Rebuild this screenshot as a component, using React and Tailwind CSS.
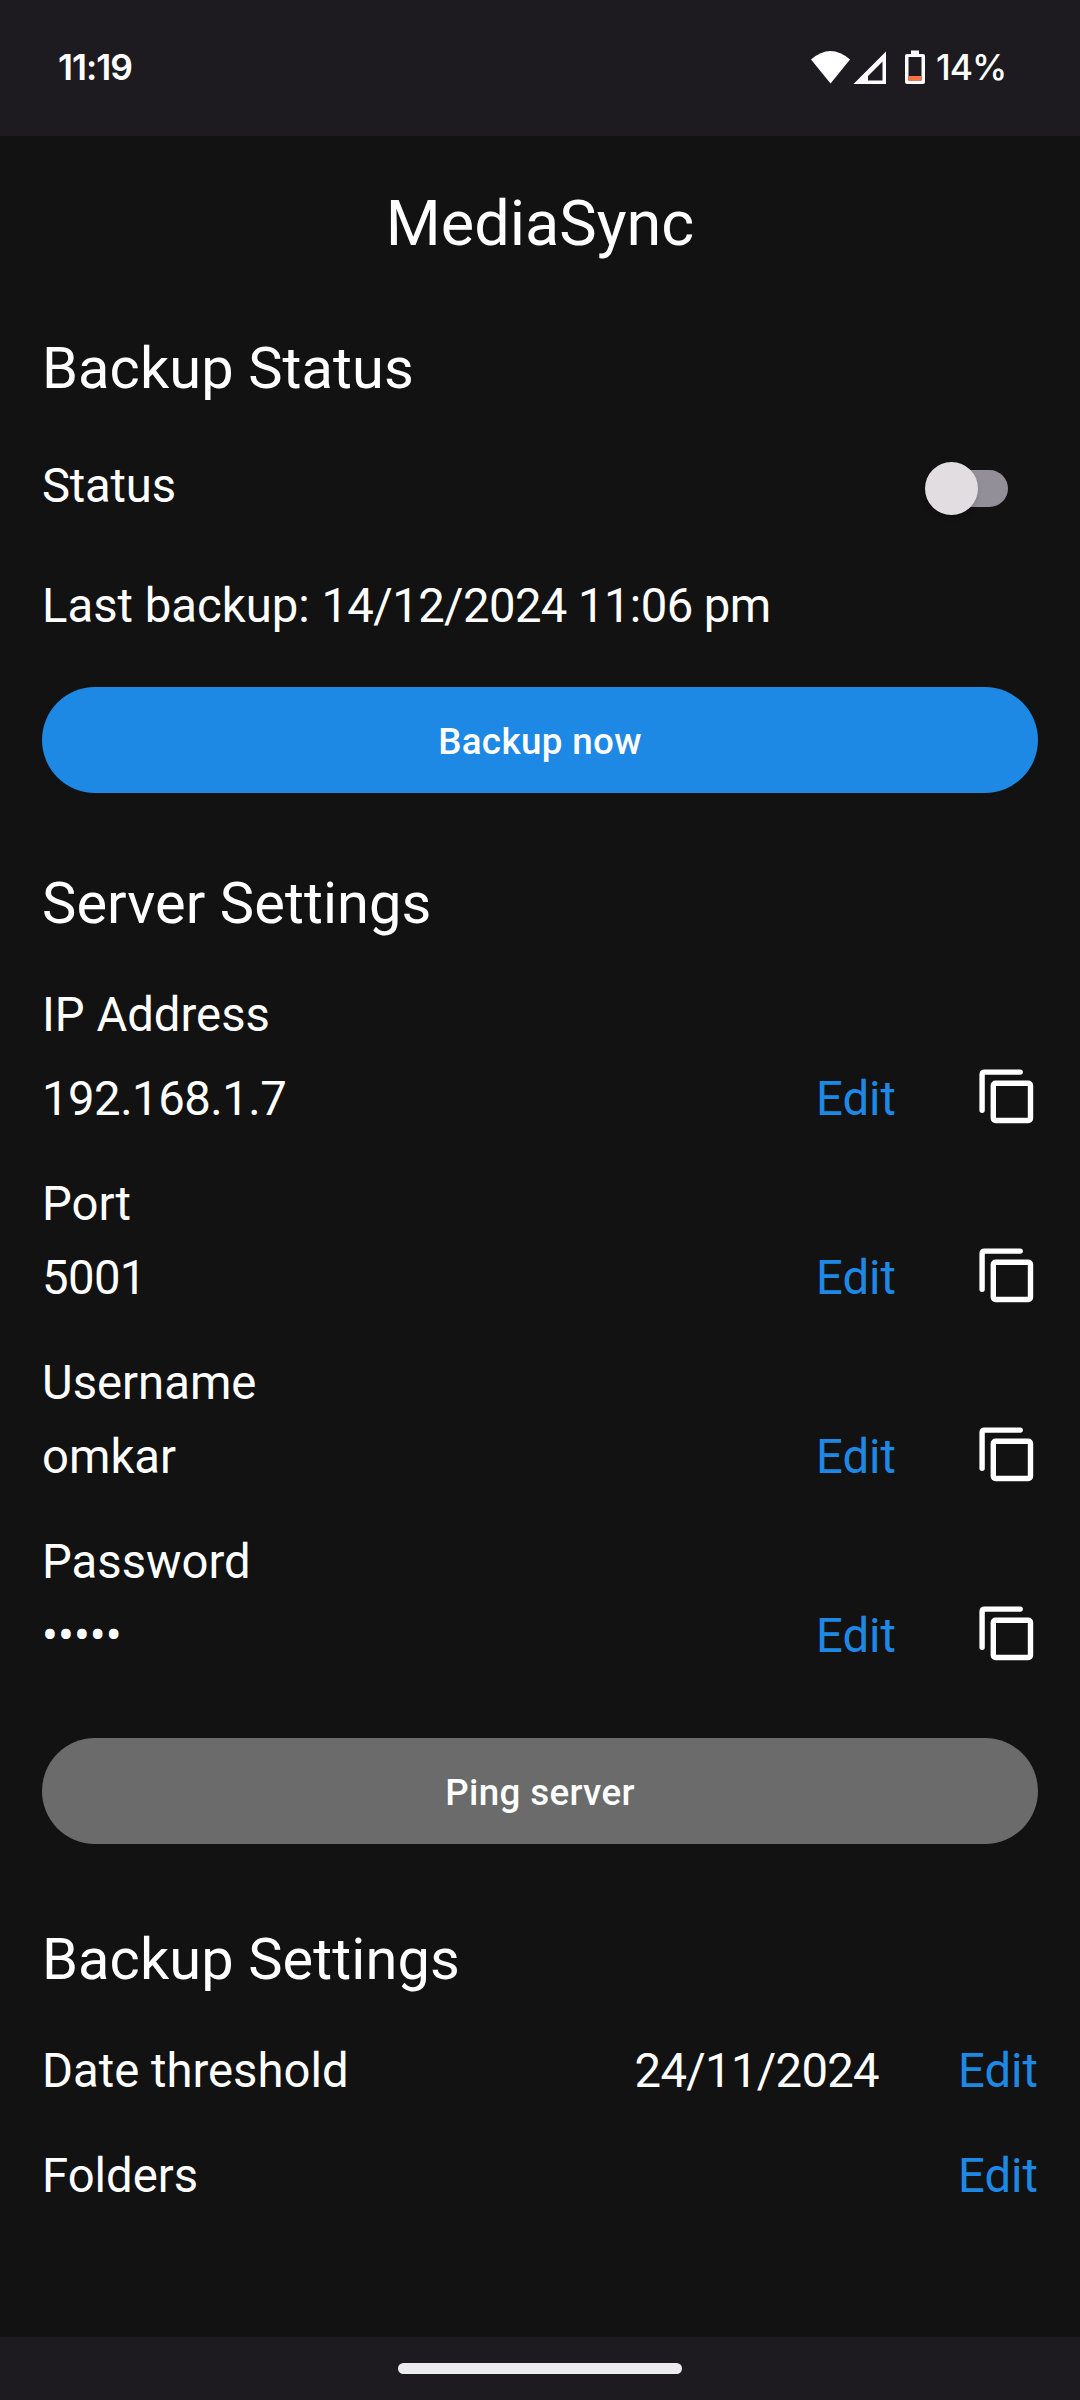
const LINK = "text-[#1e88e5]";
const HEADING = "text-[57.75px] leading-[76px] tracking-[0.1px]";
const PILL = "block h-[106px] w-full rounded-full pt-[3px] text-[36.75px] leading-[48px] font-medium tracking-[0.35px]";

function CopyIcon() {
  return (
    <svg className="block h-[63px] w-[63px]" viewBox="0 0 63 63" fill="none" stroke="#fff" strokeWidth="5.4">
      <path d="M7.1 45.200V9.600Q7.100 7.100 9.600 7.100H45.200" strokeLinecap="round" />
      <rect x="18.300" y="18.300" width="37.200" height="37.200" rx="2.200" />
    </svg>
  );
}

function StatusBar() {
  return (
    <header className="flex h-[136px] items-center justify-between bg-[#1d1b20] pl-[58px] text-white">
      <span className="font-['Inter',sans-serif] text-[35.5px] leading-none font-semibold tracking-[-1px]">11:19</span>
      <div className="flex items-center">
        <svg className="-mt-[2px] block h-[34px] w-[117px]" viewBox="810 50 117 34">
          <path d="M811 59.5Q830.500 42.500 850 59.500L830.500 83.500Z" fill="#fff" />
          <path fillRule="evenodd" d="M853.500 84L886 51.500V84ZM868 80.500H882.500V61.500L868 76Z" fill="#fff" />
          <path fillRule="evenodd" d="M911 50.500H919V54H923Q925 54 925 56V82Q925 84 923 84H907Q905 84 905 82V56Q905 54 907 54H911ZM908.500 57V80.500H921.500V57Z" fill="#fff" />
          <path d="M908.500 76H921.500V80.500H908.500Z" fill="#ff7043" />
        </svg>
        <span className="w-[153px] pl-[9px] font-['Inter',sans-serif] text-[35.5px] leading-none font-medium tracking-[-1px]">14%</span>
      </div>
    </header>
  );
}

function Setting({ label, value, gap = "mt-[12px]", valueClass = "" }) {
  return (
    <div className="mt-[43px]">
      <p>{label}</p>
      <div className={`flex h-[62px] items-start ${gap}`}>
        <span className={`flex-1 ${valueClass}`}>{value}</span>
        <button className={LINK}>Edit</button>
        <button className="-mt-[3px] ml-[79px]">
          <CopyIcon />
        </button>
      </div>
    </div>
  );
}

export default function App() {
  return (
    <div className="flex h-[2400px] w-[1080px] flex-col overflow-hidden bg-[#121212] font-['Roboto',sans-serif] text-white">
      <StatusBar />
      <main className="flex-1 px-[42px] text-[47.25px] leading-[62px]">
        <h1 className="mt-[47px] text-center text-[63px] leading-[82px]">MediaSync</h1>
        <h2 className={`mt-[65px] ${HEADING}`}>Backup Status</h2>
        <div className="mt-[49px] flex h-[62px] items-center justify-between pr-[30px]">
          <span className="tracking-[-0.2px]">Status</span>
          <span className="mt-[5px] flex h-[37px] w-[75px] items-center rounded-full bg-[#938f99]">
            <span className="-ml-[8px] h-[53px] w-[53px] shrink-0 rounded-full bg-[#e2dde1] shadow-md" />
          </span>
        </div>
        <p className="mt-[58px]">
          Last backup: <span className="tracking-[-0.6px]">14/12/2024 11:06 pm</span>
        </p>
        <button className={`mt-[50px] bg-[#1e88e5] ${PILL}`}>Backup now</button>
        <h2 className={`mt-[72px] ${HEADING}`}>Server Settings</h2>
        <Setting label="IP Address" value="192.168.1.7" gap="mt-[22px]" valueClass="tracking-[-0.5px]" />
        <Setting label="Port" value="5001" valueClass="tracking-[-0.6px]" />
        <Setting label="Username" value="omkar" />
        <Setting label="Password" value="•••••" />
        <button className={`mt-[71px] bg-[#6b6b6b] ${PILL}`}>Ping server</button>
        <h2 className={`mt-[77px] ${HEADING}`}>Backup Settings</h2>
        <div className="mt-[43px] flex">
          <span className="flex-1">Date threshold</span>
          <span className="tracking-[-0.7px]">24/11/2024</span>
          <button className={`ml-[79px] ${LINK}`}>Edit</button>
        </div>
        <div className="mt-[43px] flex justify-between">
          <span>Folders</span>
          <button className={LINK}>Edit</button>
        </div>
      </main>
      <footer className="flex h-[63px] justify-center bg-[#1d1b20] pt-[26px]">
        <div className="h-[11px] w-[284px] rounded-full bg-[#ececec]" />
      </footer>
    </div>
  );
}
